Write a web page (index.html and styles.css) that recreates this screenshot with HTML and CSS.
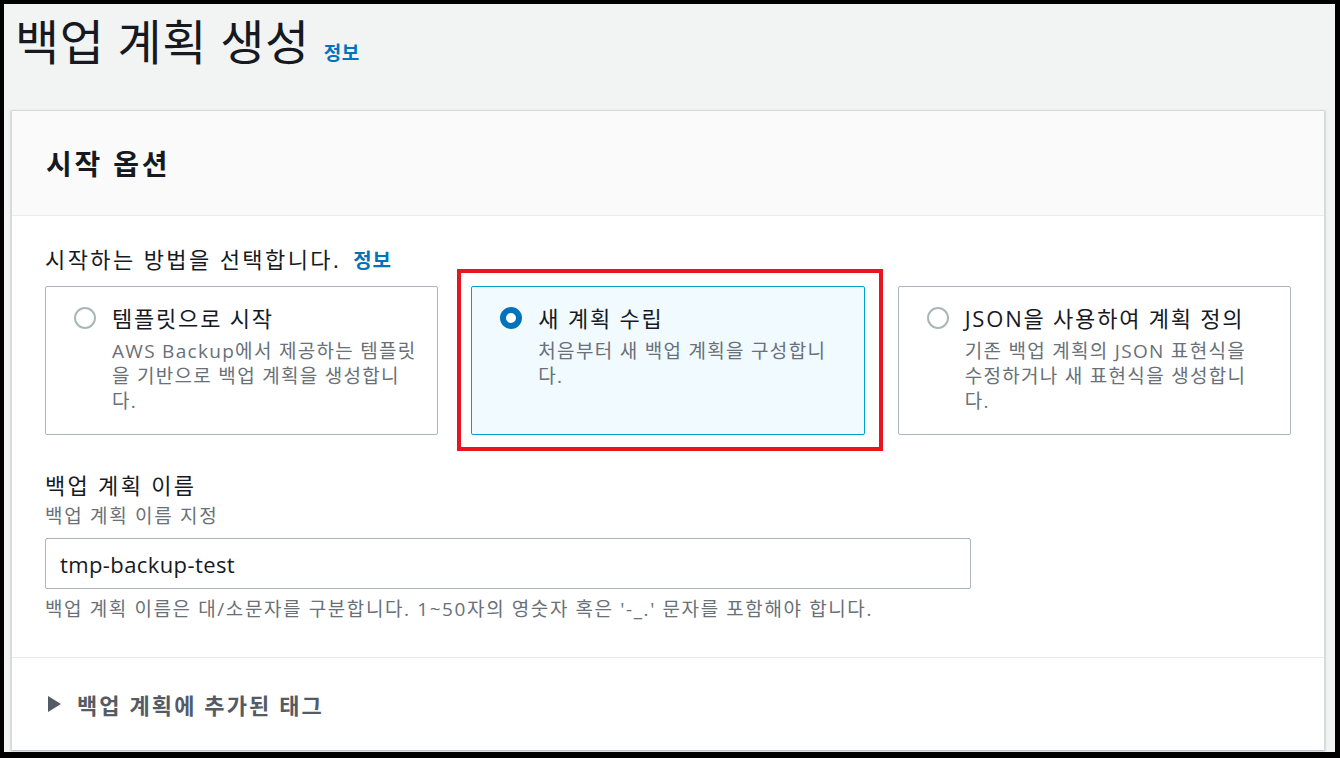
FILE: index.html
```html
<!DOCTYPE html>
<html lang="ko">
<head>
  <meta charset="UTF-8" />
  <meta name="viewport" content="width=device-width, initial-scale=1.0"/>
  <title>백업 계획 생성</title>
  <link rel="stylesheet" href="styles.css">
</head>
<body>
  <div class="frame">
    <div class="page-head">
      <h1>백업 계획 생성</h1>
      <a class="info" href="#">정보</a>
    </div>

    <div class="panel">
      <div class="panel-head">
        <h2>시작 옵션</h2>
      </div>

      <div class="panel-body">
        <div class="question"><span>시작하는 방법을 선택합니다.</span> <a class="info" href="#">정보</a></div>

        <div class="tiles">
          <label class="tile tile-template">
            <span class="radio"></span>
            <span class="tile-text">
              <span class="tile-title">템플릿으로 시작</span>
              <span class="tile-desc">AWS Backup에서 제공하는 템플릿을 기반으로 백업 계획을 생성합니다.</span>
            </span>
          </label>
          <label class="tile selected">
            <span class="radio"></span>
            <span class="tile-text">
              <span class="tile-title">새 계획 수립</span>
              <span class="tile-desc">처음부터 새 백업 계획을 구성합니다.</span>
            </span>
          </label>
          <label class="tile">
            <span class="radio"></span>
            <span class="tile-text">
              <span class="tile-title">JSON을 사용하여 계획 정의</span>
              <span class="tile-desc">기존 백업 계획의 JSON 표현식을 수정하거나 새 표현식을 생성합니다.</span>
            </span>
          </label>
        </div>

        <div class="field">
          <div class="field-label">백업 계획 이름</div>
          <div class="field-sub">백업 계획 이름 지정</div>
          <input class="field-input" type="text" value="tmp-backup-test">
          <div class="field-hint">백업 계획 이름은 대/소문자를 구분합니다. 1~50자의 영숫자 혹은 '-_.' 문자를 포함해야 합니다.</div>
        </div>
      </div>

      <div class="expander">
        <span class="caret"></span>
        <span>백업 계획에 추가된 태그</span>
      </div>
    </div>
  </div>
</body>
</html>
```

FILE: styles.css
```css
/* 전체 화면: 검은 테두리 안에 회색 콘솔 배경 */
html, body {
  margin: 0;
  padding: 0;
  height: 100%;
}

body {
  font-family: "Open Sans", "Noto Sans CJK KR", sans-serif;
  color: #16191f;
  background: #000;
}

.frame {
  box-sizing: border-box;
  height: 758px;
  border-style: solid;
  border-color: #000;
  border-width: 4px 5px 6px 4px;
  background: #f2f3f3;
  overflow: hidden;
}

a.info {
  color: #0073bb;
  text-decoration: none;
  font-weight: 700;
}

/* 페이지 제목 */
.page-head {
  box-sizing: border-box;
  height: 106px;
  padding: 10px 11px 0;
  display: flex;
  align-items: baseline;
  gap: 14px;
}
.page-head h1 {
  margin: 0;
  font-size: 48px;
  font-weight: 400;
  line-height: 56px;
  letter-spacing: 0.6px;
}
.page-head .info {
  font-size: 19px;
  letter-spacing: 0.5px;
}

/* 패널 */
.panel {
  margin: 0 10px 0 7px;
  background: #fff;
  border: 1px solid #d5dbdb;
  border-bottom: none;
  box-shadow: 0 1px 2px rgba(0,28,36,0.3);
}

.panel-head {
  box-sizing: border-box;
  height: 105px;
  padding: 0 34px;
  display: flex;
  align-items: center;
  background: #fafafa;
  border-bottom: 1px solid #eaeded;
}
.panel-head h2 {
  margin: 0;
  font-size: 28px;
  font-weight: 700;
  letter-spacing: 2.8px;
}

.panel-body {
  padding: 29px 33px 36px;
  border-bottom: 1px solid #eaeded;
}

.question {
  font-size: 22px;
  line-height: 28px;
  letter-spacing: 2.4px;
}
.question .info {
  margin-left: 4px;
  font-size: 20px;
  letter-spacing: 1px;
}

/* 시작 옵션 타일 */
.tiles {
  margin-top: 11px;
  display: grid;
  grid-template-columns: repeat(3, 1fr);
  gap: 33px;
}

.tile {
  position: relative;
  box-sizing: border-box;
  height: 149px;
  padding: 17px 28px 0;
  display: flex;
  gap: 16px;
  border: 1px solid #aab7b8;
  border-radius: 2px;
  background: #fff;
}
.tile-template {
  padding-right: 18px;
}

.tile.selected {
  border-color: #00a1c9;
  background: #f1faff;
}

/* 강조 표시용 빨간 박스 */
.tile.selected::after {
  content: "";
  position: absolute;
  left: -15px;
  top: -18px;
  right: -19px;
  bottom: -17px;
  border: 4px solid #e8141e;
}

.radio {
  flex: none;
  box-sizing: border-box;
  width: 22px;
  height: 22px;
  margin-top: 3px;
  border: 2px solid #aab7b8;
  border-radius: 50%;
  background: #fff;
}
.tile.selected .radio {
  border: 6px solid #0073bb;
}

.tile-text {
  display: flex;
  flex-direction: column;
}
.tile-title {
  font-size: 22px;
  line-height: 28px;
  letter-spacing: 1.8px;
}
.tile-desc {
  margin-top: 7px;
  font-size: 19px;
  line-height: 25px;
  letter-spacing: 1.3px;
  color: #687078;
}

/* 이름 입력 */
.field {
  margin-top: 36px;
}
.field-label {
  font-size: 22px;
  line-height: 28px;
  letter-spacing: 2.3px;
}
.field-sub {
  margin-top: 5px;
  font-size: 19px;
  line-height: 24px;
  letter-spacing: 1.7px;
  color: #687078;
}
.field-input {
  display: block;
  box-sizing: border-box;
  width: 926px;
  height: 51px;
  margin-top: 10px;
  padding: 0 14px;
  font-family: "Open Sans", "Noto Sans CJK KR", sans-serif;
  font-size: 22px;
  letter-spacing: 0.4px;
  color: #16191f;
  border: 1px solid #aab7b8;
  border-radius: 2px;
  outline: none;
}
.field-hint {
  margin-top: 8px;
  font-size: 19px;
  line-height: 24px;
  letter-spacing: 1.6px;
  color: #687078;
}

/* 태그 펼치기 */
.expander {
  box-sizing: border-box;
  height: 92px;
  padding: 0 36px;
  display: flex;
  align-items: center;
  font-size: 22px;
  font-weight: 700;
  letter-spacing: 2.1px;
  color: #545b64;
}
.caret {
  width: 0;
  height: 0;
  margin-right: 16px;
  border-style: solid;
  border-width: 8px 0 8px 13px;
  border-color: transparent transparent transparent #545b64;
}
```
